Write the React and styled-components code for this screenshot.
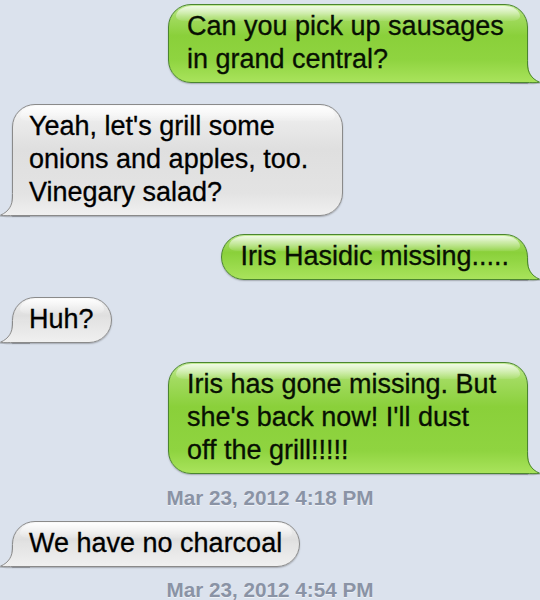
import React, { useId } from "react";
import styled, { createGlobalStyle } from "styled-components";

const Global = createGlobalStyle`
  html, body { margin: 0; padding: 0; background: #dbe2ed; }
  body { font-family: "Liberation Sans", Arial, sans-serif; }
`;

const palettes = {
  sent: {
    border: "#4b8530",
    bottom: "#a9e35c",
    low: "#8fd440",
    mid: "#8ad03a",
    high: "#a2db60",
    top: "#c4ec98",
    text: "#081003",
  },
  recv: {
    border: "#8a8a8a",
    bottom: "#f0f0f0",
    low: "#e3e3e3",
    mid: "#dfdfdf",
    high: "#ebebeb",
    top: "#fafafa",
    text: "#000000",
  },
};

const Thread = styled.div`
  width: 540px;
  height: 600px;
  overflow: hidden;
  box-sizing: border-box;
  padding-top: 4px;
  background: #dbe2ed;
  display: flex;
  flex-direction: column;
`;

const Row = styled.div`
  display: flex;
  justify-content: ${(p) => (p.$sent ? "flex-end" : "flex-start")};
  padding: 0 12px;
  margin-top: ${(p) => p.$gap}px;
`;

const Bubble = styled.div`
  position: relative;
  box-sizing: border-box;
  width: ${(p) => (p.$width ? `${p.$width}px` : "auto")};
  padding: ${(p) => (p.$sent ? "5px 18px 6px 18px" : "5px 17px 6px 16px")};
  border: 1px solid ${(p) => p.$pal.border};
  border-radius: 23px;
  border-bottom-right-radius: ${(p) => (p.$sent ? "0" : "23px")};
  border-bottom-left-radius: ${(p) => (p.$sent ? "23px" : "0")};
  background: linear-gradient(
    to top,
    ${(p) => p.$pal.bottom} 0px,
    ${(p) => p.$pal.low} 22px,
    ${(p) => p.$pal.mid} 60%,
    ${(p) => p.$pal.high} 85%,
    ${(p) => p.$pal.top} 100%
  );
  box-shadow: 0 1px 1.5px rgba(0, 0, 0, 0.25);
  color: ${(p) => p.$pal.text};
  font-size: 27px;
  line-height: 33px;
  white-space: nowrap;
  -webkit-text-stroke: 0.3px ${(p) => p.$pal.text};

  &::before {
    content: "";
    position: absolute;
    top: 1px;
    left: 7px;
    right: 7px;
    height: 15px;
    border-radius: 22px 22px 12px 12px / 14px 14px 6px 6px;
    background: linear-gradient(
      rgba(255, 255, 255, 0.75),
      rgba(255, 255, 255, 0.08)
    );
    pointer-events: none;
  }
`;

const Text = styled.span`
  position: relative;
  z-index: 1;
  display: block;
`;

const TailSvg = styled.svg`
  position: absolute;
  bottom: -1px;
  width: 30px;
  height: 22px;
  overflow: visible;
  ${(p) => (p.$sent ? "right: -13px;" : "left: -13px; transform: scaleX(-1);")}
`;

const FILL = "M0 -0.5 H18 V3 C18 11 21.5 17.5 29.5 21.2 C25 22.3 21 22 16 22 H0 Z";
const EDGE = "M17.5 -0.5 V3 C17.5 11 21 17.5 29.5 21.2 C25 22 21 21.5 16 21.5 H0";

function Tail({ sent, pal }) {
  const raw = useId();
  const id = "g" + raw.replace(/[^a-zA-Z0-9_-]/g, "");
  return (
    <TailSvg $sent={sent} viewBox="0 0 30 22" aria-hidden="true">
      <defs>
        <linearGradient id={id} x1="0" y1="22" x2="0" y2="0" gradientUnits="userSpaceOnUse">
          <stop offset="0" stopColor={pal.bottom} />
          <stop offset="1" stopColor={pal.low} />
        </linearGradient>
      </defs>
      <path d={EDGE} fill="none" stroke="rgba(0,0,0,0.2)" strokeWidth="1.2" transform="translate(0 1)" />
      <path d={FILL} fill={`url(#${id})`} />
      <path d={EDGE} fill="none" stroke={pal.border} strokeWidth="1" />
    </TailSvg>
  );
}

const Stamp = styled.div`
  margin-top: ${(p) => p.$gap}px;
  text-align: center;
  font-family: "Liberation Sans", Arial, sans-serif;
  font-weight: bold;
  font-size: 20.7px;
  line-height: 24px;
  color: #8a93a5;
  text-shadow: 0 1px 0 rgba(255, 255, 255, 0.55);
`;

const items = [
  { type: "msg", sent: true, gap: 0, width: 360, lines: ["Can you pick up sausages", "in grand central?"] },
  { type: "msg", sent: false, gap: 21, width: 331, lines: ["Yeah, let's grill some", "onions and apples, too.", "Vinegary salad?"] },
  { type: "msg", sent: true, gap: 18, lines: ["Iris Hasidic missing....."] },
  { type: "msg", sent: false, gap: 17, lines: ["Huh?"] },
  { type: "msg", sent: true, gap: 19, width: 360, lines: ["Iris has gone missing. But", "she's back now! I'll dust", "off the grill!!!!!"] },
  { type: "stamp", gap: 12, text: "Mar 23, 2012 4:18 PM" },
  { type: "msg", sent: false, gap: 11, lines: ["We have no charcoal"] },
  { type: "stamp", gap: 11, text: "Mar 23, 2012 4:54 PM" },
];

function Message({ sent, gap, width, lines }) {
  const pal = sent ? palettes.sent : palettes.recv;
  return (
    <Row $sent={sent} $gap={gap}>
      <Bubble $sent={sent} $pal={pal} $width={width}>
        <Text>
          {lines.map((l, i) => (
            <React.Fragment key={i}>
              {i > 0 && <br />}
              {l}
            </React.Fragment>
          ))}
        </Text>
        <Tail sent={sent} pal={pal} />
      </Bubble>
    </Row>
  );
}

export default function App() {
  return (
    <>
      <Global />
      <Thread>
        {items.map((it, i) =>
          it.type === "stamp" ? (
            <Stamp key={i} $gap={it.gap}>{it.text}</Stamp>
          ) : (
            <Message key={i} {...it} />
          )
        )}
      </Thread>
    </>
  );
}
